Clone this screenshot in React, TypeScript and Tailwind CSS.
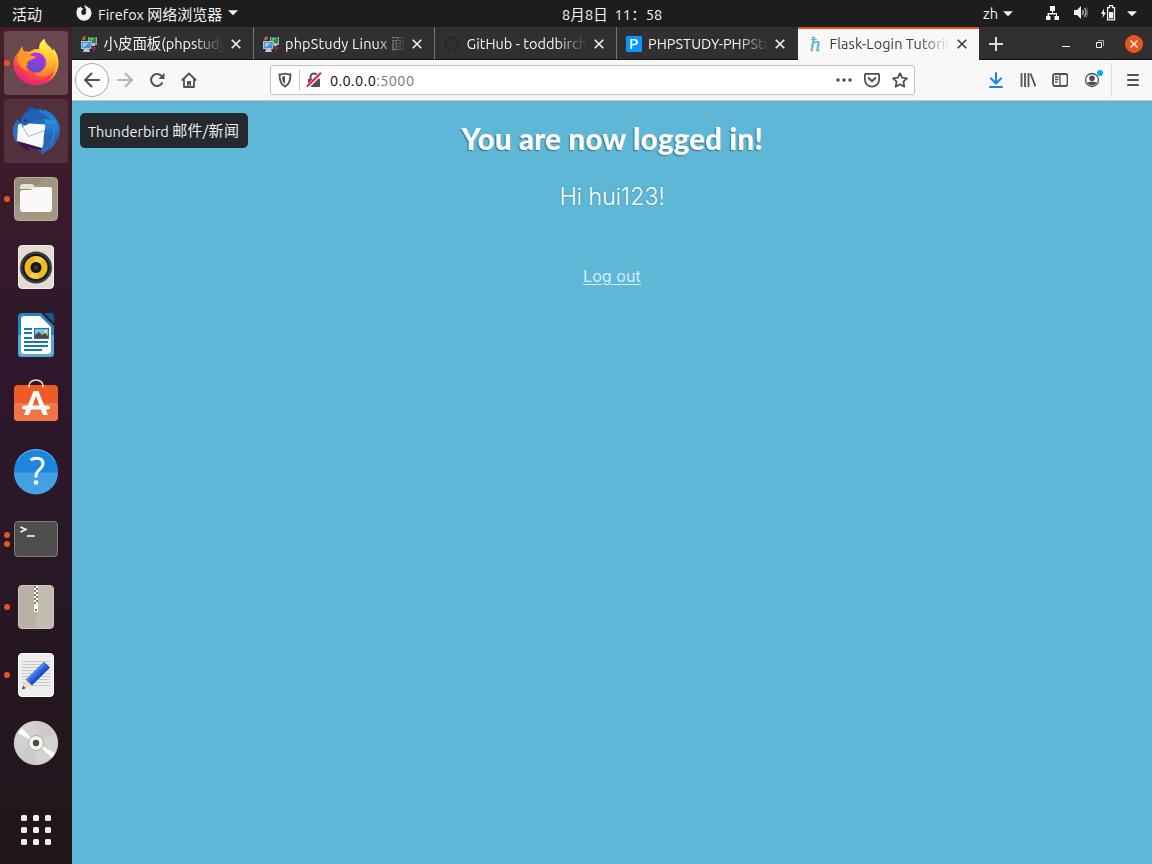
import type { ReactNode } from 'react';

const uiFont = "font-['Ubuntu','Noto_Sans','Noto_Sans_CJK_SC',sans-serif]";

function Glyph({ children, size = 16, className = '' }: { children: ReactNode; size?: number; className?: string }) {
  return (
    <svg width={size} height={size} viewBox={`0 0 ${size} ${size}`} fill="none" className={`shrink-0 ${className}`}>
      {children}
    </svg>
  );
}

function Caret() {
  return (
    <svg width="10" height="6" viewBox="0 0 10 6" className="shrink-0" fill="#f2f2f2">
      <path d="M0 .3h10L5 5.3z" />
    </svg>
  );
}

function TopBar() {
  return (
    <header className="relative flex h-[27px] w-full shrink-0 items-center bg-[#1d1d1d] text-[14.5px] leading-[27px] text-[#f2f2f2]">
      <span className="ml-3 w-[64px] pt-[2px] text-[15px]">活动</span>
      <Glyph className="mb-[2px]">
        <path fill="#f2f2f2" d="M2.3 2.1 3.1 3.1 5 1.2l.3 1.700 2.200.7-1.700 1.700-.6 2.400c.3 1.900 2.200 2.700 3.700 1.900 1.500-.8 1.700-2.700.4-3.900l1.400-.2C9.600 3.700 8.900 1.700 8 .2c2.400.4 4 1.700 4.900 3.200l.4-1c1.400 1.600 2.200 3.700 2.200 6A7.500 7.500 0 0 1 .5 8.200C.4 6 .9 3.900 2.300 2.100z" />
      </Glyph>
      <span className="ml-[6px] w-[126px] whitespace-nowrap pt-[2px]">Firefox <span className="text-[15px] tracking-[.05px]">网络浏览器</span></span>
      <span className="ml-[4px] mb-[1px] flex"><Caret /></span>
      <span className="absolute left-[562px] top-[1px] whitespace-pre text-[14.5px] tracking-[.1px]">8月8日  11：58</span>
      <div className="ml-auto flex items-center">
        <span className="w-[20px]">zh</span>
        <Caret />
        <Glyph className="mb-px ml-[32px]">
          <path fill="#f2f2f2" d="M5 1h5v5H8v2h4v3h2v4H9.500v-4H11V9.500H4V11h1.500v4H1v-4h1.500V8H7V6H5z" />
        </Glyph>
        <Glyph className="mb-px ml-[12px]">
          <path fill="#f2f2f2" d="M1 5h3l4-4v13l-4-4H1z" />
          <path stroke="#bbb" strokeWidth="1.200" d="M9.500 5c1.200 1.700 1.200 3.300 0 5M11.500 3c2 3 2 6 0 9" />
          <path stroke="#666" d="M13.500 2.500c1.500 3 1.500 7 0 10" />
        </Glyph>
        <Glyph className="mb-px ml-[12px]">
          <path fill="#f2f2f2" d="M3 3.500 0 9h2l-.5 4L5 7.500H3z" />
          <path stroke="#f2f2f2" strokeWidth="1.300" d="M6.600 2.600H8.500V.7h3v1.900h2v12.200H6.600z" />
          <path fill="#f2f2f2" d="M8 7h4.200v6.300H8z" />
        </Glyph>
        <span className="ml-[10px] mr-[15px] flex"><Caret /></span>
      </div>
    </header>
  );
}

function Firefox() {
  return (
    <Glyph size={48}>
      <defs>
        <linearGradient id="ffBody" x1="38" y1="5" x2="12" y2="45" gradientUnits="userSpaceOnUse">
          <stop stopColor="#fff44f" /><stop offset=".35" stopColor="#ffb02e" /><stop offset=".65" stopColor="#ff5a36" /><stop offset="1" stopColor="#e6167b" />
        </linearGradient>
        <linearGradient id="ffGlobe" x1="28" y1="13" x2="20" y2="34" gradientUnits="userSpaceOnUse">
          <stop stopColor="#b833e1" /><stop offset="1" stopColor="#5650cf" />
        </linearGradient>
        <linearGradient id="ffTail" x1="32" y1="2" x2="36" y2="40" gradientUnits="userSpaceOnUse">
          <stop stopColor="#fff44f" /><stop offset=".5" stopColor="#ffc52d" /><stop offset="1" stopColor="#ff6a2a" />
        </linearGradient>
      </defs>
      <path fill="url(#ffBody)" d="M6.500 13.500c.7-2 1.900-4 3.800-6 .2 2.300.7 3.800 1.900 5 1.800-.4 3.500-.2 5 .4C22 9 26 10 27 10l.5-3c.5-3 2.500-5.500 5-7C32 4 38 7 41 12l.5-2.500C45 14 46.500 19 46.500 24c0 13-10 22-22.500 22S1.500 37 1.500 25c0-4.500 1.500-9 5-11.500z" />
      <path fill="url(#ffTail)" d="M32.500 0c-3 2-5.500 5-5 8.500C28 13 36 15 35 24c-.6 7-6.500 11-13 11 9 5 19 1 22-8 1-5 0-9-3-15C38 7 32 4 32.500 0z" />
      <circle cx="24" cy="23.500" r="10" fill="url(#ffGlobe)" />
      <path fill="#ff9926" d="M7 15c1-2 2-4 3.300-7 .2 2.500.9 4 2 5 3 0 5 1.500 6.500 3.500l4.700 1c.3 1.500-3.500 3-5.500 3.700-3 1-3.500 3-2 5-3-1-3 3 0 6-6-2-10-7-11-12z" />
      <path fill="#ef276f" fillOpacity=".8" d="M3 31c4 8 11 10.500 19 10.500 8 0 14-3 20-9.500-3 9-10 14-18 14S7 41 3 31z" />
    </Glyph>
  );
}

function Thunderbird() {
  return (
    <Glyph size={48}>
      <defs>
        <linearGradient id="tbBack" x1="14" y1="3" x2="38" y2="46" gradientUnits="userSpaceOnUse">
          <stop stopColor="#1d58ab" /><stop offset=".5" stopColor="#2375c6" /><stop offset="1" stopColor="#2a5dad" />
        </linearGradient>
        <linearGradient id="tbWing" x1="36" y1="14" x2="38" y2="46" gradientUnits="userSpaceOnUse">
          <stop stopColor="#2b8fdc" /><stop offset=".5" stopColor="#2067b6" /><stop offset="1" stopColor="#3b68b5" />
        </linearGradient>
      </defs>
      <path fill="#2b6fc0" d="M6 12C-1 19-1 29 5 36l5-16z" />
      <path fill="url(#tbBack)" d="M9 17C8 11 11 6 17 3.500L15.500 1.500 20 .3 23 2C34 0 44 7 47 17c1.500 6 1 12-2 17l-.5-2c-1 5-3.500 8-7.500 11l.5-2.500c-2 3-5 5.500-9 7l2-3.500-4 .5z" />
      <path fill="#f8f9fb" d="m6 18 3.500-2L33 17.500l1.500 5L33 42 5 34z" />
      <path stroke="#b2b5bb" d="m10 18.500 6.500 11L34 23" />
      <path fill="#3a1a4e" d="M5 34.300 33 42l-3 2-9-2.500c-2-.5-4-.5-5.500-.5l2.500 3.500C12 42.500 8 39 5 34.300z" />
      <path fill="#2260b3" d="M10 18.500C7.500 12 11 6 18 3.500c9-1 17 3.500 18 10.500-5-1.500-10-2-14-.5-5 1.500-6 6-12 5z" />
      <path fill="url(#tbWing)" d="M32 12c5 0 11 2 15 7 1 6 0 11-2 15l-.5-2c-1 5-3.500 8-7.500 11l.5-2.500c-2 3-5 5.500-9 7l2-3.500-2.500.5c5-7 3-11 4-17 .5-5 3-10 0-15.500z" />
      <path stroke="#3ba0e6" strokeWidth=".8" d="M27 4c7 2 12 6 16 13M32 4c5 2 9 6 12 12M41 20c2 5 1 11-2 16" />
      <path fill="#55a8ea" d="m9 16.500 3 1.500-1.500 3z" />
      <circle cx="13.300" cy="13.800" r="1.300" fill="#2b3648" />
    </Glyph>
  );
}

const dockIcons: { name: string; dots: number; icon: ReactNode }[] = [
  { name: 'Firefox', dots: 1, icon: <Firefox /> },
  { name: 'Thunderbird', dots: 0, icon: <Thunderbird /> },
  {
    name: 'Files', dots: 1, icon: (
      <Glyph size={48}>
        <rect x="2.500" y="2.500" width="43" height="43" rx="4" fill="#a09882" stroke="#b7b09c" />
        <path fill="#968e79" d="M3 30V6a3 3 0 0 1 3-3h26z" />
        <path fill="#e5e1d4" d="M8 12q0-3 3-3h8.500q1.500 0 2.500 1.500l1.500 3.500H8z" />
        <path fill="#faf9f7" d="M8 18q0-3 3-3h7c3 0 3-3 6-3h14q2 0 2 2v20q0 3-3 3H11q-3 0-3-3z" />
      </Glyph>
    ),
  },
  {
    name: 'Rhythmbox', dots: 0, icon: (
      <Glyph size={48}>
        <rect x="6.500" y="2.500" width="35" height="43" rx="3.500" fill="#e2ddd2" stroke="#f1eee6" />
        <circle cx="24" cy="24.500" r="16" fill="#3b3c43" />
        <circle cx="24" cy="24.500" r="13.500" fill="#151722" />
        <circle cx="24" cy="24.500" r="11.500" fill="#edb91c" />
        <path fill="#f9df65" d="M24 24.500 17 33a11.500 11.500 0 0 0 10 2zM24 24.500l7-9a11.500 11.500 0 0 0-9-2z" opacity=".6" />
        <circle cx="24" cy="24.500" r="5.500" fill="#15161b" /><circle cx="24" cy="24.500" r="2.500" fill="#33353b" />
      </Glyph>
    ),
  },
  {
    name: 'Writer', dots: 0, icon: (
      <Glyph size={48}>
        <path fill="#2385ba" d="M10 2h19l13 13v27q0 4-4 4H10q-4 0-4-4V6q0-4 4-4z" />
        <path fill="#54aad4" d="M6 24h36v18q0 4-4 4H10q-4 0-4-4z" />
        <path fill="#fbfdfe" d="M12 5h16l11 11v24q0 3-3 3H12q-3 0-3-3V8q0-3 3-3z" />
        <path fill="#125c87" d="M32 2h7q3 0 3 3v7z" />
        <path stroke="#1c75a9" strokeWidth="2" d="M12 18h8M12 22h8M12 27h8M12 31h24M12 35h24M12 39h18" />
        <path fill="#1c75a9" d="M22 17h15v11H22z" /><path fill="#74c4e6" d="M23 18h13v9H23z" />
        <circle cx="33.500" cy="20.500" r="1.800" fill="#ffd94d" /><path fill="#5a4638" d="M23 27v-3l4-3 3 3 3-2 3 3v2z" />
      </Glyph>
    ),
  },
  {
    name: 'Software', dots: 0, icon: (
      <Glyph size={48}>
        <rect x="2" y="6" width="44" height="36" rx="4" fill="#ef5a29" />
        <path fill="#f27548" d="M2 24h44v14q0 4-4 4H6q-4 0-4-4z" />
        <path stroke="#efd9b0" strokeWidth="1.600" d="M17 8.500V7c0-3.500 3-6 7-6s7 2.500 7 6v1.500" />
        <path fill="#fbfafa" d="M21.500 12h5L36 36h-5l-7-19-7 19h-5z" />
        <path stroke="#fff" strokeWidth="4" strokeLinecap="round" d="M12 28.500h24" />
      </Glyph>
    ),
  },
  {
    name: 'Help', dots: 0, icon: (
      <Glyph size={48}>
        <circle cx="24" cy="24" r="22" fill="#1c86dc" /><path fill="#43a0e4" d="M2 25.500h44a22 22 0 0 1-44 0z" />
        <path stroke="#8bc6f3" strokeOpacity=".7" d="M5 14a21.500 21.500 0 0 1 38 0" />
        <path stroke="white" strokeWidth="3" d="M18.500 13c2-1.500 4-1.800 6-1.800 4 0 6.500 2 6.500 5.300 0 5.500-7 6.500-7 12v2" />
        <circle cx="24" cy="35.500" r="2.300" fill="white" />
      </Glyph>
    ),
  },
  {
    name: 'Terminal', dots: 2, icon: (
      <Glyph size={48}>
        <rect x="2.500" y="6.500" width="43" height="35" rx="3.500" fill="#4e4e4e" stroke="#7d7d79" />
        <path stroke="#fff" strokeWidth="1.500" d="m8.500 12 5.500 2.500L8.500 17" /><path stroke="#fff" strokeWidth="1.500" d="M15 21h8" />
      </Glyph>
    ),
  },
  {
    name: 'Archive', dots: 1, icon: (
      <Glyph size={48}>
        <rect x="6.500" y="2.500" width="35" height="43" rx="3.500" fill="#b8b2a4" stroke="#d1cbbd" />
        <path fill="#c2bdaf" d="M24.500 3H38q3 0 3 3.500v35q0 3.500-3 3.500H24.500z" />
        <path fill="#faf9f6" d="M22 3h4v26h-4z" />
        <path stroke="#827c6d" strokeWidth="2" strokeDasharray="2 2" d="M23 3v18M25 5v16" />
        <path fill="#fff" d="M22 22h4v7h-4z" /><path fill="#77715f" d="M23 26h2v2h-2z" />
      </Glyph>
    ),
  },
  {
    name: 'Text editor', dots: 1, icon: (
      <Glyph size={48}>
        <rect x="6.500" y="2.500" width="35" height="43" rx="3.500" fill="#ededed" stroke="#fff" />
        <path stroke="#c9c9c9" d="M10 10.500h28M10 13.500h28M10 16.500h28M10 19.500h28M10 22.500h28M10 25.500h28M10 28.500h28M10 31.500h28M10 34.500h28" />
        <path fill="#f6d7b7" d="m10 38.500 4-10 6 6z" /><path fill="#49484b" d="m10 38.500 1.200-3.800 2.500 2.500z" />
        <path fill="#1b4fc4" d="m20 34.500-6-6 18-17.500 6 5.500z" /><path fill="#4c83ee" d="m16 30-2-1.500 18-17.500 2 2z" /><path fill="#2d66e0" d="m18 32-2-2 18-17 2 2z" />
      </Glyph>
    ),
  },
  {
    name: 'Disc', dots: 0, icon: (
      <Glyph size={48}>
        <circle cx="24" cy="24" r="21.700" fill="#d2d2d2" stroke="#e4e4e4" strokeWidth=".7" />
        <path fill="#c2c2c2" d="M24 24V2.500A21.500 21.500 0 0 1 43 14zM24 24v21.500A21.500 21.500 0 0 1 5 34z" opacity=".4" />
        <path fill="#fff" d="m24 24-18-10 4-5zM24 24l19 10-3 5z" />
        <circle cx="24" cy="24" r="7.500" fill="#f6f4ef" stroke="#b7aa8f" /><circle cx="24" cy="24" r="3.200" fill="#4b4b4b" />
      </Glyph>
    ),
  },
];

function Dock() {
  return (
    <aside className="flex w-[72px] shrink-0 flex-col items-center gap-1 bg-linear-to-b from-[#471d29] via-[#2e172c] via-40% to-[#21161b] pt-1">
      {dockIcons.map((d, i) => (
        <div key={d.name} className={`relative flex size-16 shrink-0 items-center justify-center rounded ${i === 0 ? 'bg-[#69474e]' : i === 1 ? 'bg-[#52303d]' : ''}`}>
          {d.icon}
          {d.dots > 0 && (
            <div className="absolute inset-y-0 left-0 flex flex-col justify-center gap-[3px]">
              {Array.from({ length: d.dots }, (_, n) => <i key={n} className="size-[6px] rounded-full bg-[#e95420]" />)}
            </div>
          )}
        </div>
      ))}
      <div className="mt-[36px] grid grid-cols-3 gap-[6px]">
        {Array.from({ length: 9 }, (_, n) => <i key={n} className="size-[6px] rounded-[1.5px] bg-[#eeeeec]" />)}
      </div>
    </aside>
  );
}

function ServersIcon() {
  return (
    <Glyph>
      <path fill="#98a9ab" d="M7 1h9v8H7z" /><path fill="#278b45" d="M8 1h7v6H8z" /><path fill="#6dbd61" d="M9 2h5L9 5z" />
      <path fill="#a9c5df" d="M0 5h11l-1 8H0z" /><path fill="#4c90cf" d="M1 6h9l-1 6H1z" /><path fill="#9bc9f2" d="M2 7h6l-5 4H2z" />
      <path fill="#b4c7d5" d="M3 13h5l1 3H2zM11 8h3v2h-3z" />
      <path stroke="#d47438" strokeWidth="1.200" d="M5 .5 2 2l2 1-3 1" /><path stroke="#b13135" strokeWidth="1.300" d="m11 11 3 1-2 1 1 2" />
    </Glyph>
  );
}

const tabs: { title: string; icon: ReactNode; tracking: string }[] = [
  { title: '小皮面板(phpstudy', icon: <ServersIcon />, tracking: 'tracking-[-0.05px]' },
  { title: 'phpStudy Linux 面', icon: <ServersIcon />, tracking: 'tracking-[0.15px]' },
  {
    title: 'GitHub - toddbirch', tracking: 'tracking-[0.02px]', icon: (
      <Glyph><path fill="#24292e" d="M8 0C3.580 0 0 3.580 0 8c0 3.540 2.290 6.530 5.470 7.590.4.070.55-.17.55-.38v-1.500c-2 .4-2.600-.6-2.800-1-.1-.3-.5-1-.9-1.200-.3-.2-.7-.6 0-.6.600 0 1.100.6 1.200.8.700 1.200 1.900.9 2.400.7.100-.5.300-.9.500-1.100-1.800-.2-3.600-.9-3.600-4 0-.9.300-1.600.8-2.100-.1-.2-.4-1 .1-2.100 0 0 .7-.2 2.200.8a7.500 7.500 0 0 1 4 0c1.500-1 2.200-.8 2.200-.8.400 1.100.200 1.900.100 2.100.5.500.8 1.200.8 2.100 0 3.100-1.900 3.700-3.700 4 .3.200.6.700.6 1.500v2.200c0 .2.100.5.500.4A8 8 0 0 0 8 0z" /></Glyph>
    ),
  },
  {
    title: 'PHPSTUDY-PHPStu', tracking: 'tracking-[0.02px]', icon: (
      <span className="flex size-4 shrink-0 items-center justify-center bg-[#0796ff] text-[15px] leading-4 font-medium text-white">P</span>
    ),
  },
  {
    title: 'Flask-Login Tutoria', tracking: 'tracking-[0.05px]', icon: (
      <span className="flex size-4 shrink-0 items-center justify-center font-['Liberation_Serif',serif] text-[21px] leading-4 text-[#5eb5d3] italic [-webkit-text-stroke:.4px_#5eb5d3]">ħ</span>
    ),
  },
];

function TabBar() {
  return (
    <div className="flex h-[33px] shrink-0 bg-[#322f30] text-[14.5px] text-[#f5f5f5]">
      {tabs.map((t, i) => {
        const active = i === 4;
        return (
          <div key={t.title} className={`flex h-[33px] shrink-0 items-center pl-[9px] ${active ? 'w-[181px] border-t-2 border-[#e95420] bg-[#f8f8f7] pb-[2px] text-[#3b3b3b]' : 'w-[181.5px] border-b border-b-[#131313] pt-px'} ${i < 3 ? 'border-r border-r-[#757374]' : ''}`}>
            {t.icon}
            <span className={`ml-[6.5px] w-[120.5px] whitespace-nowrap pt-px mask-r-from-75% mask-r-to-100% ${t.tracking}`}>{t.title}</span>
            <Glyph size={10} className="ml-[6.5px]"><path stroke="currentColor" strokeWidth="1.600" d="m.7.7 8.600 8.600m0-8.600L.7 9.300" /></Glyph>
          </div>
        );
      })}
      <div className="flex flex-1 items-center border-b border-[#131313] pl-[10px] pt-px">
        <Glyph size={14}><path stroke="#ddd" strokeWidth="2" d="M7 0v14M0 7h14" /></Glyph>
        <Glyph size={8} className="ml-[59px] mt-[5px]"><path stroke="#fff" d="M0 4.500h8" /></Glyph>
        <Glyph size={8} className="ml-[26px]"><path stroke="#fff" d="M.5 2.500h5v5h-5z" /><path stroke="#aaa" d="M2 .5h5.500V6" /></Glyph>
        <span className="ml-[21px] flex size-[18px] items-center justify-center rounded-full bg-[#e95420]">
          <Glyph size={8}><path stroke="#fff" strokeWidth="1.300" d="m.5.5 7 7m0-7-7 7" /></Glyph>
        </span>
      </div>
    </div>
  );
}

function Toolbar() {
  return (
    <div className="flex h-[41px] shrink-0 items-center border-b border-[#c4c2c2] bg-[#f8f8f8] pl-[3px] text-[#515151]">
      <span className="flex size-[34px] items-center justify-center rounded-full border border-[#a9a9a9] bg-[#fdfdfd]">
        <Glyph><path stroke="currentColor" strokeWidth="2" strokeLinecap="round" strokeLinejoin="round" d="M15 8H1.500M7.500 1.500 1 8l6.500 6.500" /></Glyph>
      </span>
      <Glyph className="ml-2 text-[#b5b5b5]"><path stroke="currentColor" strokeWidth="2" strokeLinecap="round" strokeLinejoin="round" d="M1 8h13.500M8.500 1.500 15 8l-6.500 6.500" /></Glyph>
      <Glyph className="ml-4"><path stroke="currentColor" strokeWidth="2" d="M13.500 10.500A6 6 0 1 1 13 4.500" /><path fill="currentColor" d="M15.500.8V7h-6z" /></Glyph>
      <Glyph className="ml-4"><path stroke="currentColor" strokeWidth="1.800" strokeLinejoin="round" d="m.8 8.500 7.200-7 7.200 7M3 7v8h10V7" /><path fill="currentColor" d="M6 9h4v6H8.800v-2.500H7.500V15H6z" /></Glyph>
      <div className="ml-[73px] flex h-[30px] w-[645px] items-center rounded-[3px] border border-[#c1c1c1] bg-white pl-[6px] shadow-xs">
        <Glyph><path stroke="currentColor" strokeWidth="1.800" d="M8 1.500c2 .9 4 1 5.500.8 0 6-.8 10-5.500 12.300C3.300 12.300 2.500 8.300 2.500 2.300c1.500.2 3.500.1 5.500-.8z" /><path fill="currentColor" d="M8 4v8c-2-1.500-3-3.500-3-7.500 1 .1 2-.1 3-.5z" /></Glyph>
        <i className="ml-[6px] h-[22px] w-px bg-[#c6c6c6]" />
        <Glyph className="ml-[6px]"><path fill="currentColor" d="M2 7h12v8H2z" /><path stroke="currentColor" strokeWidth="2" d="M4.500 8V5a3.500 3.500 0 0 1 7 0v3" /><path stroke="#fff" strokeWidth="4" d="M1 15.500 15 1" /><path stroke="#ff0b50" strokeWidth="2" d="M1 14.500 15 .8" /></Glyph>
        <span className="ml-[8px] pt-[2px] text-[14.5px] tracking-[.4px] text-[#0c0c0d]">0.0.0.0<span className="text-[#77777b]">:5000</span></span>
        <div className="ml-auto flex items-center gap-3 pr-[6px]">
          <Glyph><g fill="currentColor"><circle cx="2" cy="8" r="1.800" /><circle cx="8" cy="8" r="1.800" /><circle cx="14" cy="8" r="1.800" /></g></Glyph>
          <Glyph><path stroke="currentColor" strokeWidth="1.800" strokeLinejoin="round" d="M1.500 1.800h13q.6 0 .6.7v5a7 7 0 0 1-14.200 0v-5q0-.7.6-.7z" /><path stroke="currentColor" strokeWidth="2" strokeLinecap="round" strokeLinejoin="round" d="M4.700 6 8 9.200 11.300 6" /></Glyph>
          <Glyph><path stroke="currentColor" strokeWidth="1.800" strokeLinejoin="round" d="m8 1.200 2.100 4.500 4.900.6-3.600 3.400.9 5L8 12.300l-4.300 2.400.9-5L1 6.300l4.900-.6z" /></Glyph>
        </div>
      </div>
      <Glyph className="ml-[73px] text-[#0a84ff]"><path stroke="currentColor" strokeWidth="2" strokeLinecap="round" strokeLinejoin="round" d="M8 1v9.500M3 6.500l5 5 5-5M2 15h12" /></Glyph>
      <Glyph className="ml-4"><path stroke="currentColor" strokeWidth="1.800" d="M1.500 1v14M5 1v14M8.500 1v14M10.500 1.500l5 13" /></Glyph>
      <Glyph className="ml-4"><rect x="1" y="2" width="14.500" height="12" rx="2" stroke="currentColor" strokeWidth="1.800" /><path stroke="currentColor" strokeWidth="1.300" d="M8 2v12M3 5h3.500M3 7.500h3.500M3 10h2.500" /></Glyph>
      <span className="relative ml-4 flex">
        <Glyph><circle cx="8" cy="8" r="6.500" stroke="currentColor" strokeWidth="1.300" /><circle cx="8" cy="6.200" r="2.800" fill="currentColor" /><path fill="currentColor" d="M3 10.500c2 0 2.500-1 5-1s3 1 5 1c-1 2-3 3-5 3s-4-1-5-3z" /></Glyph>
        <i className="absolute -right-[3px] -top-[2px] size-[6px] rounded-full bg-[#00a9f4]" />
      </span>
      <i className="ml-[11px] h-[34px] w-px bg-[#dcdcdc]" />
      <Glyph className="ml-[13px]"><path stroke="currentColor" strokeWidth="2" strokeLinecap="round" d="M3 3h10M3 8h10M3 13h10" /></Glyph>
    </div>
  );
}

export default function App() {
  return (
    <div className={`relative flex h-[864px] w-[1152px] flex-col overflow-hidden ${uiFont}`}>
      <TopBar />
      <div className="flex min-h-0 flex-1">
        <Dock />
        <div className="flex min-w-0 flex-1 flex-col">
          <TabBar />
          <Toolbar />
          <main className="flex flex-1 flex-col items-center bg-[#5eb7d6] pt-[20px] text-white">
            <h1 className="font-['Lato',sans-serif] text-[29.5px] leading-[36px] font-black tracking-[.2px] whitespace-nowrap [text-shadow:-1px_1px_1px_#35707f]">You are now logged in!</h1>
            <p className="mt-[22px] font-['Inter',sans-serif] text-[23.5px] leading-[36px] font-light tracking-[-.2px] whitespace-nowrap [text-shadow:0_0_2px_#3e8297]">Hi hui123!</p>
            <a className="mt-[49px] font-['Inter',sans-serif] text-[16px] leading-[24px] tracking-[.1px] whitespace-nowrap text-[#d3eef8] underline underline-offset-2">Log out</a>
          </main>
        </div>
      </div>
      <div className="absolute left-[80px] top-[113px] flex h-[35px] w-[168px] items-center whitespace-nowrap rounded-[5px] bg-[#23292c] pl-2 pt-[2px] text-[14.5px] text-[#eee]">Thunderbird&nbsp;<span className="text-[15px] tracking-[.3px]">邮件/新闻</span></div>
    </div>
  );
}
